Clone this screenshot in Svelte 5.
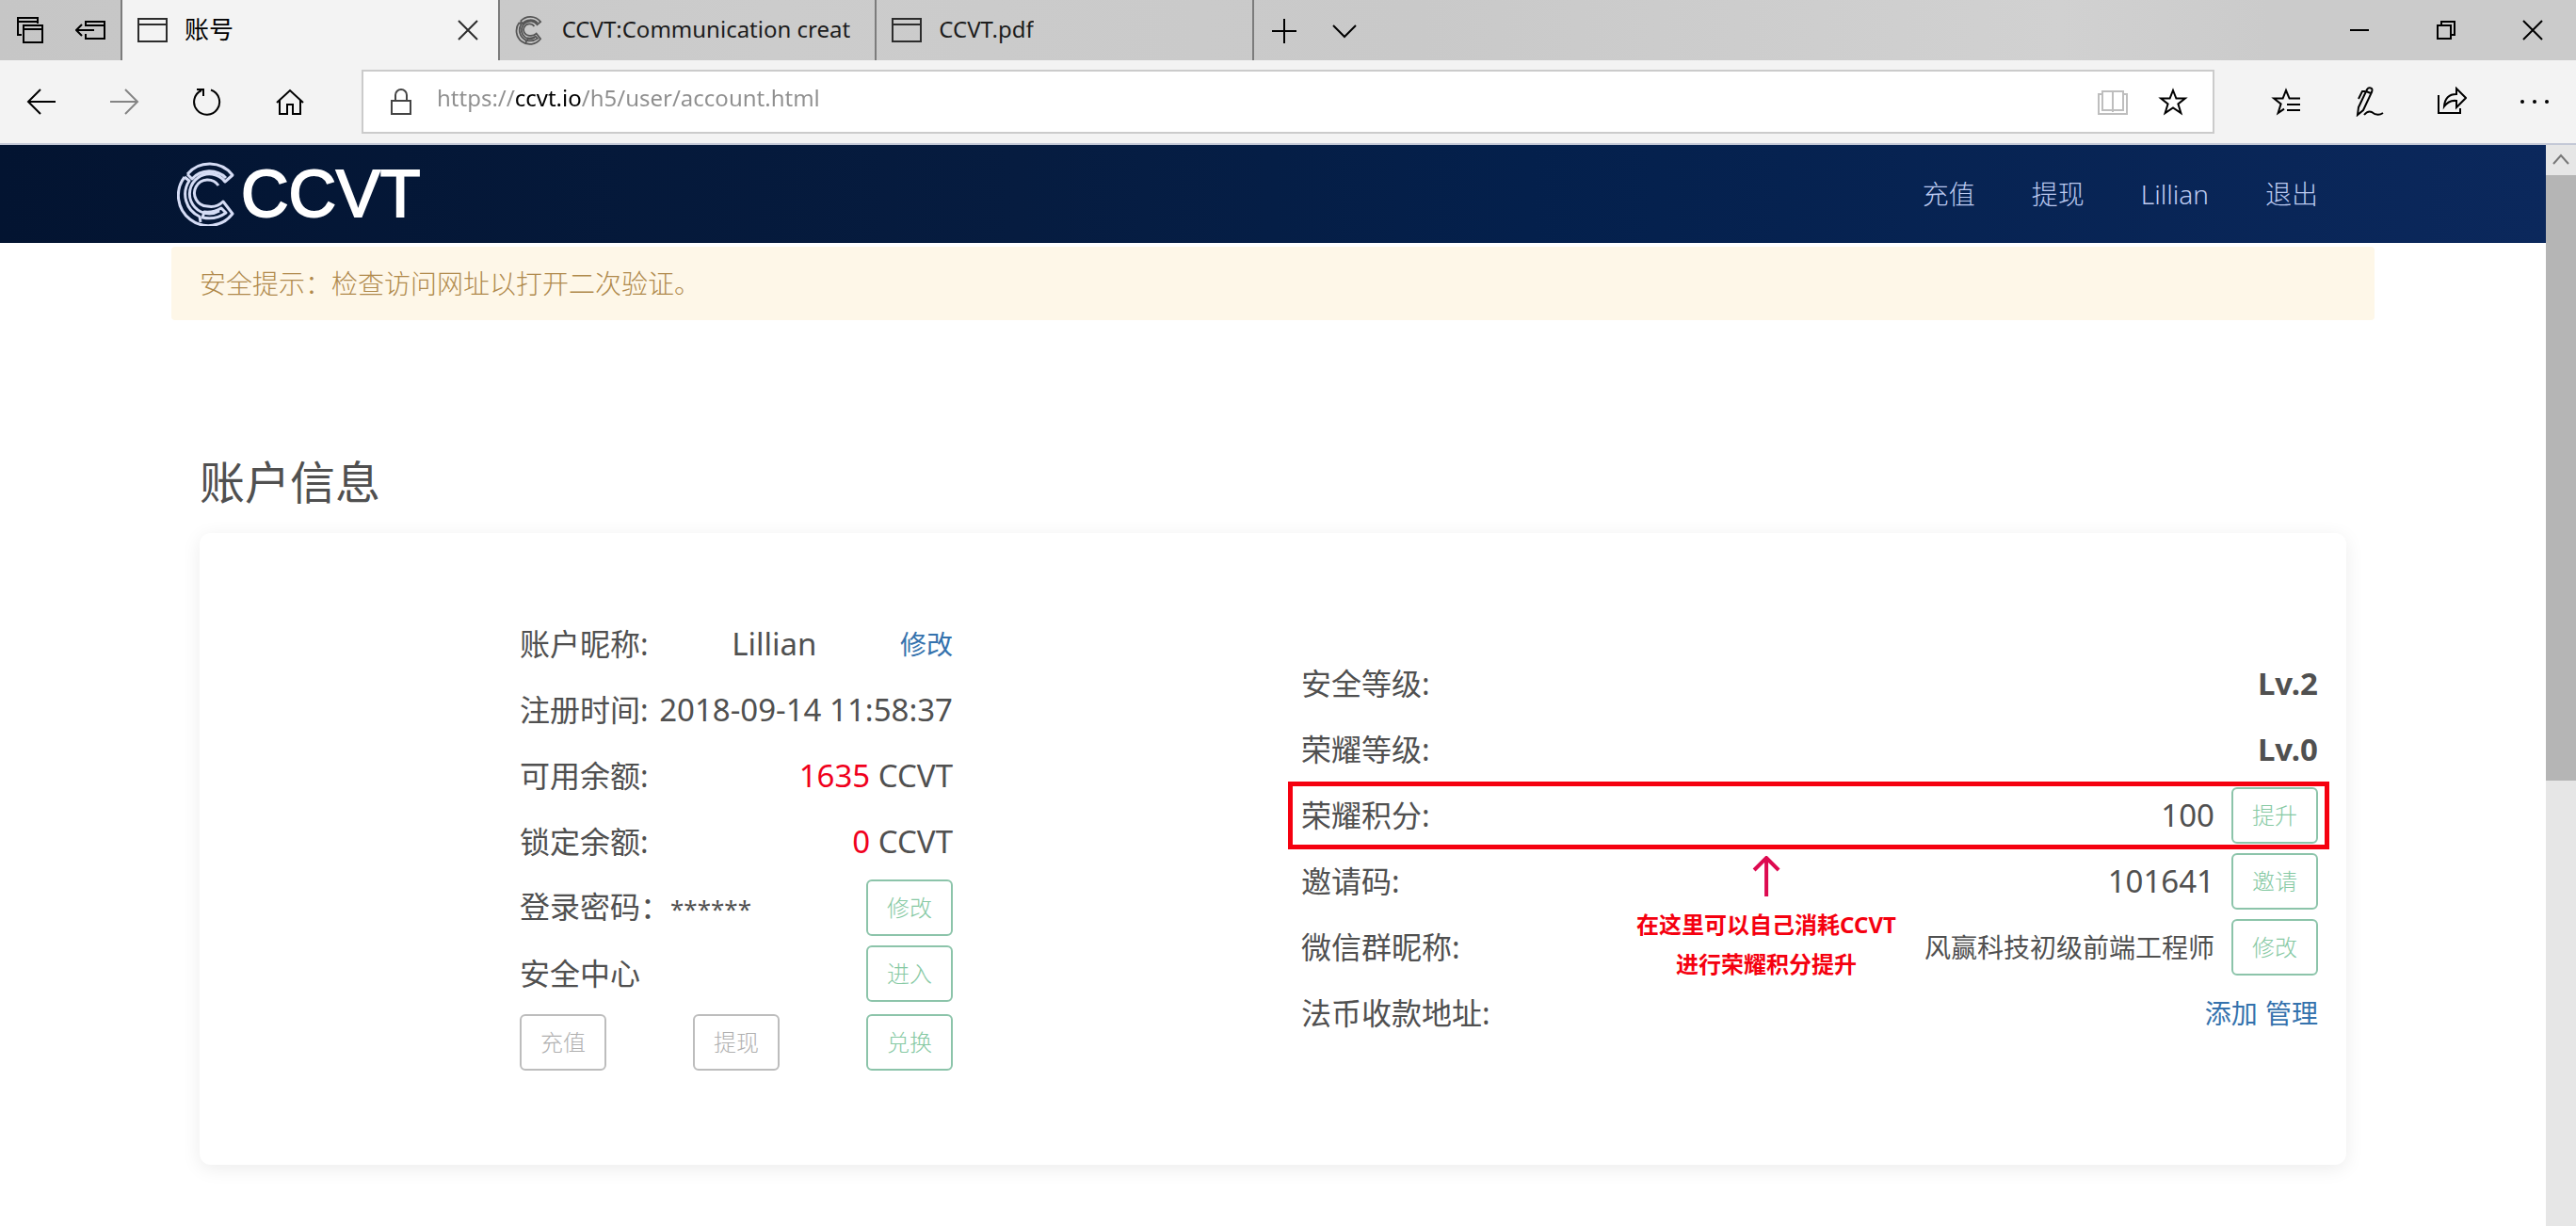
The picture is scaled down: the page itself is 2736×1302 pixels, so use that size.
<script>
  const tabs = [
    { title: '账号', icon: 'page', active: true },
    { title: 'CCVT:Communication creat', icon: 'coin', active: false },
    { title: 'CCVT.pdf', icon: 'page', active: false }
  ];
  const menu = ['充值', '提现', 'Lillian', '退出'];
  const balances = [
    { label: '可用余额:', amount: 1635 },
    { label: '锁定余额:', amount: 0 }
  ];
  let url = $state('https://ccvt.io/h5/user/account.html');
</script>

{#snippet rings()}
  <path d="M-23-21 A31 31 0 0 1 25-20 L17-13 A21 21 0 1 0 11 18 M-23-21 L-18-16 A25 25 0 0 1 18-17" />
  <path d="M-26-18 A32 32 0 1 0 25 21 L15 8 Q8 15-2 13 A14 14 0 1 1 10-9 M-26-18 L-21-14 A26 26 0 0 0-10 24 L-9 30" />
  <path d="M-7 25 Q7 28 18 20 L13 15 Q5 20-5 19 Z" />
{/snippet}

<div class="window">
  <div class="tabbar">
    <button class="tool" aria-label="标签页">
      <svg viewBox="0 0 32 32"><path d="M7 21H3V3H24V9M3 7H24" /><path d="M9 11H29V29H9ZM9 15H29" /></svg>
    </button>
    <button class="tool" aria-label="搁置标签页">
      <svg viewBox="0 0 32 32"><path d="M11 12V7H31V25H11V20M11 11H31M1 16H20M7 10L1 16L7 22" /></svg>
    </button>
    <div class="tabs" role="tablist">
      {#each tabs as tab}
        <div class="tab" class:active={tab.active}>
          <button class="title" role="tab" aria-selected={tab.active}>
            {#if tab.icon === 'page'}
              <svg class="sheet" viewBox="0 0 32 32"><path d="M1 4H31V28H1ZM1 10H31" /></svg>
            {:else}
              <svg class="coin" viewBox="-36 -36 72 72">{@render rings()}</svg>
            {/if}
            <span>{tab.title}</span>
          </button>
          {#if tab.active}
            <button class="close" aria-label="关闭标签页">
              <svg viewBox="0 0 32 32"><path d="M6 6L26 26M26 6L6 26" /></svg>
            </button>
          {/if}
        </div>
      {/each}
    </div>
    <button class="tool" aria-label="新标签页">
      <svg viewBox="0 0 32 32"><path d="M3 17H29M16 4V30" /></svg>
    </button>
    <button class="tool" aria-label="标签页预览">
      <svg viewBox="0 0 32 32"><path d="M4 11L16 23L28 11" /></svg>
    </button>
    <div class="controls">
      <button aria-label="最小化"><svg viewBox="0 0 32 32"><path d="M6 16H26" /></svg></button>
      <button aria-label="还原">
        <svg viewBox="0 0 32 32"><path d="M7 11H21V25H7ZM11 11V7H25V21H21" /></svg>
      </button>
      <button aria-label="关闭"><svg viewBox="0 0 32 32"><path d="M6 6L26 26M26 6L6 26" /></svg></button>
    </div>
  </div>

  <div class="toolbar">
    <button aria-label="后退"><svg viewBox="0 0 32 32"><path d="M31 16H2M15 3L2 16L15 29" /></svg></button>
    <button aria-label="前进" disabled>
      <svg viewBox="0 0 32 32"><path d="M1 16H30M17 3L30 16L17 29" /></svg>
    </button>
    <button aria-label="刷新">
      <svg viewBox="0 0 32 32"><path d="M20 3.5A13.5 13.5 0 1 1 10 4M5 3H12V10" /></svg>
    </button>
    <button aria-label="主页">
      <svg viewBox="0 0 32 32"><path d="M2 17L16 4L30 17M5 14V29H13V19H19V29H27V14" /></svg>
    </button>
    <div class="address">
      <svg class="lock" viewBox="0 0 32 32"><path d="M6 15H26V29H6ZM10 15V9A6 6 0 0 1 22 9V15" /></svg>
      <input type="text" aria-label="地址" bind:value={url} />
      <button class="reading" aria-label="阅读视图" disabled>
        <svg viewBox="0 0 32 32"><path d="M16 5V27M16 5H5V25H16H27V5H16M5 8H1V29H31V8H27" /></svg>
      </button>
      <button aria-label="添加到收藏夹">
        <svg viewBox="0 0 32 32"><path d="M16 4L19.400 12.600H28.800L21.400 18.400L24.400 28L16 22.400L7.600 28L10.600 18.400L3.200 12.600H12.600Z" /></svg>
      </button>
    </div>
    <button aria-label="收藏夹">
      <svg viewBox="0 0 32 32"><path d="M31 12.600H19.600L16 4L12.600 12.600H3.200L10.600 18.400L7.600 28L14 23.600M17 19H31M17 25H31" /></svg>
    </button>
    <button aria-label="添加笔记">
      <svg viewBox="0 0 32 32"><path d="M5 22L14 3Q16 0 19 2Q20 3 19 6L10 25L4 30ZM12 5H9L5 13M13 5L18 7M11 30Q15 25 19 27Q25 32 31 28" /></svg>
    </button>
    <button aria-label="共享">
      <svg viewBox="0 0 32 32"><path d="M2 9V28H25V23M8 21Q9 8 21 8V2L31 12L21 22V15Q13 14 8 21Z" /></svg>
    </button>
    <button aria-label="更多">
      <svg viewBox="0 0 32 32"><g class="dots"><circle cx="3" cy="16" r="2" /><circle cx="16" cy="16" r="2" /><circle cx="29" cy="16" r="2" /></g></svg>
    </button>
  </div>

  <div class="viewport">
    <div class="page">
      <header>
        <div class="container bar">
          <a class="brand" href="#home">
            <svg viewBox="-34 -34 68 68">{@render rings()}</svg>
            <span>CCVT</span>
          </a>
          <nav>
            {#each menu as item}
              <a href="#{item}">{item}</a>
            {/each}
          </nav>
        </div>
      </header>

      <main class="container">
        <p class="alert" role="alert">安全提示：检查访问网址以打开二次验证。</p>
        <section>
          <h1>账户信息</h1>
          <div class="card">
            <div class="half">
              <div class="summary">
                <div class="row">
                  <span>账户昵称:</span><span class="value">Lillian</span><a href="#nickname">修改</a>
                </div>
                <div class="row">
                  <span>注册时间:</span><span class="value">2018-09-14 11:58:37</span>
                </div>
                {#each balances as balance}
                  <div class="row">
                    <span>{balance.label}</span>
                    <span class="value"><span class="amount">{balance.amount}</span> CCVT</span>
                  </div>
                {/each}
                <div class="row">
                  <span>登录密码：<span class="mask">******</span></span>
                  <button class="btn">修改</button>
                </div>
                <div class="row"><span>安全中心</span><button class="btn">进入</button></div>
                <div class="actions">
                  <button class="btn" disabled>充值</button>
                  <button class="btn" disabled>提现</button>
                  <button class="btn">兑换</button>
                </div>
              </div>
            </div>

            <div class="half">
              <div class="details">
                <div class="row"><span>安全等级:</span><strong class="value">Lv.2</strong></div>
                <div class="row"><span>荣耀等级:</span><strong class="value">Lv.0</strong></div>
                <div class="row marked">
                  <span>荣耀积分:</span>
                  <span class="end"><span class="value">100</span><button class="btn">提升</button></span>
                  <div class="note">
                    <svg viewBox="0 0 32 44"><path d="M16 43V2M3 15L16 2L29 15" /></svg>
                    <p>在这里可以自己消耗CCVT<br />进行荣耀积分提升</p>
                  </div>
                </div>
                <div class="row">
                  <span>邀请码:</span>
                  <span class="end"><span class="value">101641</span><button class="btn">邀请</button></span>
                </div>
                <div class="row">
                  <span>微信群昵称:</span>
                  <span class="end"><span class="group">风赢科技初级前端工程师</span><button class="btn">修改</button></span>
                </div>
                <div class="row">
                  <span>法币收款地址:</span>
                  <span><a href="#add">添加</a> <a href="#manage">管理</a></span>
                </div>
              </div>
            </div>
          </div>
        </section>
      </main>
    </div>

    <div class="scrollbar" aria-hidden="true">
      <div class="arrow"><svg viewBox="0 0 32 32"><path d="M8 20L16 11L24 20" /></svg></div>
      <div class="thumb"></div>
    </div>
  </div>
</div>

<style>
  :global(body) {
    margin: 0;
    background: #fff;
  }

  .window {
    display: flex;
    flex-direction: column;
    min-height: 100vh;
    color: #505050;
    font-family: 'Noto Sans', 'Noto Sans CJK SC', sans-serif;
    font-size: 32px;
  }

  button {
    display: flex;
    align-items: center;
    justify-content: center;
    flex: none;
    margin: 0;
    padding: 0;
    border: 0;
    background: none;
    color: inherit;
    font: inherit;
  }

  a {
    color: #3572ad;
    font-size: 28px;
    text-decoration: none;
  }

  p,
  h1 {
    margin: 0;
  }

  svg {
    display: block;
    flex: none;
    width: 32px;
    height: 32px;
    fill: none;
    stroke: #000;
    stroke-width: 2;
  }

  /* Tab strip */
  .tabbar {
    display: flex;
    height: 64px;
    background: linear-gradient(90deg, #c6c6c6, #cccccc 30%, #c9c9c9 55%, #d1d1d1 80%, #cbcbcb 88%);
  }

  .tool {
    width: 64px;
  }

  .tabs {
    display: flex;
    width: 1204px;
    border-left: 2px solid #7c7c7c;
    box-sizing: border-box;
  }

  .tab {
    display: flex;
    flex: 1;
    min-width: 0;
    border-right: 2px solid #7c7c7c;
    color: #1c1c1c;
    font-size: 24px;
  }

  .tab.active {
    background: #f3f3f3;
    color: #000;
    font-size: 26px;
  }

  .title {
    flex: 1;
    gap: 18px;
    min-width: 0;
    padding-left: 16px;
    justify-content: flex-start;
    line-height: 36px;
    white-space: nowrap;
  }

  .title span {
    overflow: hidden;
    padding-bottom: 2px;
  }

  .sheet {
    stroke: #2c2c2c;
  }

  .coin {
    stroke: #555;
    stroke-width: 4;
  }

  .close {
    width: 64px;
  }

  .close svg {
    stroke: #2c2c2c;
  }

  .controls {
    display: flex;
    margin-left: auto;
  }

  .controls button {
    width: 92px;
  }

  /* Navigation toolbar */
  .toolbar {
    display: flex;
    padding: 10px 0;
    border-bottom: 2px solid #c3c8d6;
    background: #f3f3f3;
  }

  .toolbar button {
    width: 88px;
  }

  .toolbar button:disabled {
    opacity: 0.45;
  }

  .address {
    display: flex;
    flex: 1;
    align-items: center;
    height: 68px;
    margin: 0 32px;
    padding: 0 10px 0 24px;
    border: 2px solid #cbcbcb;
    box-sizing: border-box;
    background: #fff;
  }

  .address button {
    width: 64px;
  }

  .address .reading:disabled {
    opacity: 0.25;
  }

  .lock {
    stroke: #444;
  }

  .address input {
    flex: 1;
    min-width: 0;
    margin: 0 0 8px 22px;
    padding: 0;
    border: 0;
    outline: 0;
    background: linear-gradient(90deg, #8f8f8f 82px, #000 82px, #000 153px, #8f8f8f 153px);
    background-clip: text;
    -webkit-background-clip: text;
    color: transparent;
    font: inherit;
    font-size: 24px;
    line-height: 36px;
  }

  .dots {
    fill: #000;
    stroke: none;
  }

  /* Web page */
  .viewport {
    display: flex;
    flex: 1;
  }

  .page {
    flex: 1;
    min-width: 0;
  }

  .container {
    max-width: 2340px;
    margin: 0 auto;
  }

  header {
    background: linear-gradient(90deg, #031431, #061c40 40%, #04204c 60%, #0b285c);
  }

  .bar {
    display: flex;
    align-items: center;
    justify-content: space-between;
    height: 104px;
  }

  .brand {
    display: flex;
    align-items: center;
    padding-left: 6px;
    color: #fff;
    font-family: 'Liberation Sans', Arial, sans-serif;
    font-size: 70px;
    line-height: 70px;
    -webkit-text-stroke: 2px #fff;
  }

  .brand svg {
    width: 68px;
    height: 68px;
    stroke: #d5dcf5;
    stroke-width: 3;
    stroke-linejoin: round;
  }

  nav {
    display: flex;
    gap: 60px;
    padding-right: 60px;
  }

  nav a {
    color: #bccaf0;
    font-weight: 300;
    line-height: 40px;
  }

  .alert {
    margin-top: 4px;
    padding: 18px 30px;
    border-radius: 4px;
    background: #fef7e8;
    color: #b08a4c;
    font-size: 28px;
    font-weight: 300;
    line-height: 42px;
  }

  section {
    padding: 138px 30px 64px;
  }

  h1 {
    margin-bottom: 20px;
    font-size: 48px;
    font-weight: 400;
    line-height: 68px;
  }

  .card {
    display: grid;
    grid-template-columns: 1fr 1fr;
    align-items: center;
    padding: 83px 0 85px;
    border-radius: 12px;
    box-shadow: 0 4px 20px rgba(0, 0, 0, 0.08);
  }

  .half {
    padding: 0 30px;
  }

  .summary {
    width: 460px;
    margin: 0 auto 15px;
  }

  .row {
    position: relative;
    display: flex;
    align-items: center;
    justify-content: space-between;
    height: 70px;
    line-height: 48px;
    white-space: nowrap;
  }

  .value {
    font-size: 33px;
  }

  .mask {
    font-size: 26px;
  }

  .amount {
    color: #f0001c;
  }

  .group {
    font-size: 28px;
  }

  .end {
    display: flex;
    align-items: center;
    gap: 18px;
  }

  .btn {
    width: 92px;
    height: 60px;
    border: 2px solid #8cc4aa;
    border-radius: 6px;
    color: #86c9a3;
    font-size: 24px;
    font-weight: 300;
    line-height: 36px;
  }

  .btn:disabled {
    border-color: #bdbdbd;
    color: #b0b0b0;
  }

  .actions {
    display: flex;
    justify-content: space-between;
    padding-top: 8px;
  }

  /* Highlight frame and hint laid over the score row */
  .marked::before {
    content: '';
    position: absolute;
    inset: -1px -12px -1px -14px;
    border: 5px solid #f5000f;
    pointer-events: none;
  }

  .note {
    position: absolute;
    top: 100%;
    left: 50%;
    display: flex;
    flex-direction: column;
    align-items: center;
    gap: 8px;
    padding: 8px 92px 0 0;
    transform: translateX(-50%);
    color: #f5000f;
    font-size: 24px;
    font-weight: 700;
    line-height: 42px;
    text-align: center;
  }

  .note svg {
    height: 44px;
    stroke: #dd0a50;
    stroke-width: 4;
  }

  /* Scroll bar */
  .scrollbar {
    width: 32px;
    background: #e6e6e6;
  }

  .arrow svg {
    stroke: #777;
  }

  .thumb {
    height: 56%;
    background: #b5b5b5;
  }
</style>
